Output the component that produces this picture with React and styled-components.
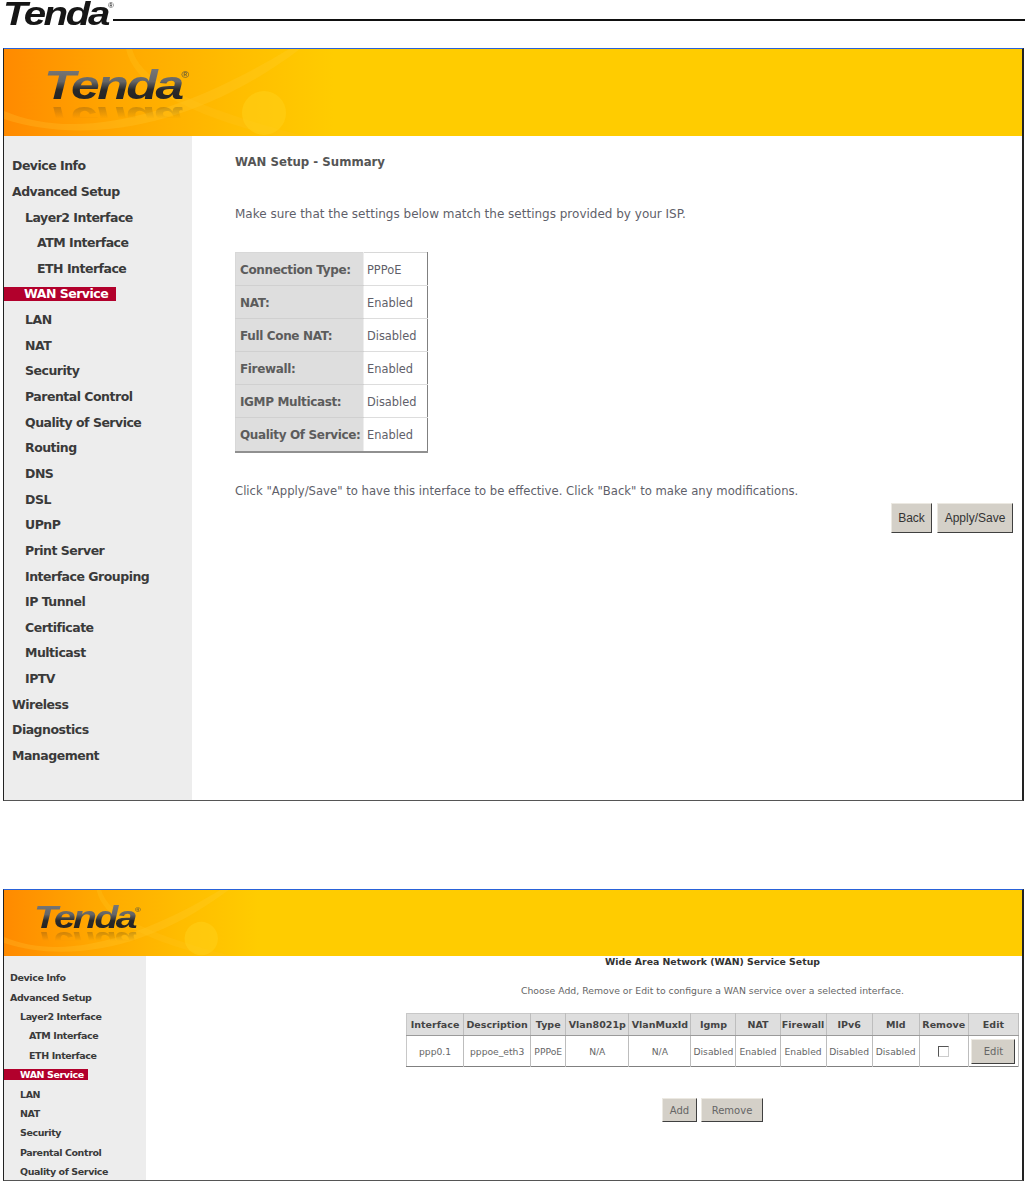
import styled, { createGlobalStyle } from "styled-components"

const GlobalStyle = createGlobalStyle`
    html, body { margin: 0; padding: 0; background: #fff; }
    body { width: 1025px; height: 1181px; overflow: hidden; font-family: "DejaVu Sans", Tahoma, sans-serif; }
`

const topMenu = [
    ["Device Info", 0], ["Advanced Setup", 0], ["Layer2 Interface", 1], ["ATM Interface", 2], ["ETH Interface", 2],
    ["WAN Service", 1, true], ["LAN", 1], ["NAT", 1], ["Security", 1], ["Parental Control", 1], ["Quality of Service", 1],
    ["Routing", 1], ["DNS", 1], ["DSL", 1], ["UPnP", 1], ["Print Server", 1], ["Interface Grouping", 1], ["IP Tunnel", 1],
    ["Certificate", 1], ["Multicast", 1], ["IPTV", 1], ["Wireless", 0], ["Diagnostics", 0], ["Management", 0],
]
const summary = [
    ["Connection Type:", "PPPoE"], ["NAT:", "Enabled"], ["Full Cone NAT:", "Disabled"],
    ["Firewall:", "Enabled"], ["IGMP Multicast:", "Disabled"], ["Quality Of Service:", "Enabled"],
]
const columns = [
    ["Interface", 57, "ppp0.1"], ["Description", 67, "pppoe_eth3"], ["Type", 35, "PPPoE"], ["Vlan8021p", 63, "N/A"],
    ["VlanMuxId", 62, "N/A"], ["Igmp", 45, "Disabled"], ["NAT", 44, "Enabled"], ["Firewall", 46, "Enabled"],
    ["IPv6", 46, "Disabled"], ["Mld", 47, "Disabled"], ["Remove", 49], ["Edit", 50],
]

const Swirl = () => (
    <BannerArt viewBox="0 0 400 87" aria-hidden="true">
        <path d="M0 62 C70 92 170 70 285 0 L296 0 C190 80 80 96 0 70 Z" fill="#ffd23a" opacity="0.22" />
        <path d="M128 0 C138 34 190 58 300 87 L270 87 C180 64 130 36 122 0 Z" fill="#ffc21a" opacity="0.3" />
        <circle cx="260" cy="64" r="22" fill="#ffd21c" opacity="0.45" />
    </BannerArt>
)

const App = () => {
    return (
        <>
            <GlobalStyle />
            <DocHeader>
                <DocLogo>Tenda<Registered>®</Registered></DocLogo>
                <DocRule />
            </DocHeader>

            <Frame $height={753}>
                <Banner $height={87} $pad="16px 0 0 40px" $end={330}>
                    <Swirl />
                    <BannerLogo $size={41}>Tenda<Registered>®</Registered></BannerLogo>
                </Banner>
                <Body>
                    <Sidebar $width={188} $pad={17}>
                        {topMenu.map(([label, level, active]) => (
                            <MenuItem key={label} $h={25.65} $size={12.5} $track={-0.5} $indent={[8, 21, 33][level]} $active={active}>
                                <MenuLabel $active={active} $barH={14} $barW={112} $barPad={20}>{label}</MenuLabel>
                            </MenuItem>
                        ))}
                    </Sidebar>
                    <Summary>
                        <SummaryTitle>WAN Setup - Summary</SummaryTitle>
                        <SummaryText $top={38} $size={12}>Make sure that the settings below match the settings provided by your ISP.</SummaryText>
                        <SummaryTable>
                            <tbody>
                                {summary.map(([key, value]) => (
                                    <tr key={key}>
                                        <SummaryKey>{key}</SummaryKey>
                                        <SummaryValue>{value}</SummaryValue>
                                    </tr>
                                ))}
                            </tbody>
                        </SummaryTable>
                        <SummaryText $top={31} $size={11.65}>Click "Apply/Save" to have this interface to be effective. Click "Back" to make any modifications.</SummaryText>
                        <ActionRow>
                            <Button $w={41} $h={30}>Back</Button>
                            <Button $w={76} $h={30}>Apply/Save</Button>
                        </ActionRow>
                    </Summary>
                </Body>
            </Frame>

            <Frame $height={292} $top={88}>
                <Banner $height={66} $pad="12px 0 0 30px" $end={255}>
                    <Swirl />
                    <BannerLogo $size={31}>Tenda<Registered>®</Registered></BannerLogo>
                </Banner>
                <Body>
                    <Sidebar $width={142} $pad={12}>
                        {topMenu.slice(0, 11).map(([label, level, active]) => (
                            <MenuItem key={label} $h={19.4} $size={9.5} $track={-0.4} $indent={[6, 16, 25][level]} $active={active}>
                                <MenuLabel $active={active} $barH={11} $barW={84} $barPad={16}>{label}</MenuLabel>
                            </MenuItem>
                        ))}
                    </Sidebar>
                    <Services>
                        <ServicesTitle>Wide Area Network (WAN) Service Setup</ServicesTitle>
                        <ServicesText>Choose Add, Remove or Edit to configure a WAN service over a selected interface.</ServicesText>
                        <ServiceTable>
                            <colgroup>
                                {columns.map(([name, width]) => <col key={name} style={{ width }} />)}
                            </colgroup>
                            <thead>
                                <tr>{columns.map(([name]) => <ServiceHead key={name}>{name}</ServiceHead>)}</tr>
                            </thead>
                            <tbody>
                                <tr>
                                    {columns.slice(0, 10).map(([name, , value]) => <ServiceCell key={name}>{value}</ServiceCell>)}
                                    <ServiceCell><RemoveBox /></ServiceCell>
                                    <ServiceCell><Button $w={44} $h={25} $small>Edit</Button></ServiceCell>
                                </tr>
                            </tbody>
                        </ServiceTable>
                        <CenterRow>
                            <Button $w={35} $h={24} $small>Add</Button>
                            <Button $w={62} $h={24} $small>Remove</Button>
                        </CenterRow>
                    </Services>
                </Body>
            </Frame>
        </>
    )
}
export default App

const DocHeader = styled.header`
    height: 48px;
    display: flex;
    align-items: flex-start;
    padding-left: 3px;
    box-sizing: border-box;
`
const DocLogo = styled.div`
    width: 110px;
    font: italic bold 33px/27px "Liberation Sans", sans-serif;
    letter-spacing: -2px;
    color: #161616;
    white-space: nowrap;
    transform: scaleX(1.22);
    transform-origin: left top;
`
const Registered = styled.sup`
    font-size: 0.2em;
    font-style: normal;
    font-weight: normal;
    letter-spacing: 0;
    vertical-align: 2.6em;
    line-height: 0;
`
const DocRule = styled.div`
    flex: 1;
    height: 2px;
    margin-top: 19px;
    background: #111;
`
const Frame = styled.section`
    width: 1021px;
    height: ${p => p.$height}px;
    margin: ${p => p.$top || 0}px 0 0 3px;
    box-sizing: border-box;
    border-top: 1px solid #2a62d8;
    border-left: 1px solid #222;
    border-right: 2px solid #222;
    border-bottom: 1px solid #555;
    display: flex;
    flex-direction: column;
    overflow: hidden;
`
const Banner = styled.div`
    position: relative;
    flex: none;
    height: ${p => p.$height}px;
    padding: ${p => p.$pad};
    box-sizing: border-box;
    background: linear-gradient(90deg, #ff8a00 0, #ffa800 ${p => p.$end * 0.35}px, #ffbd00 ${p => p.$end * 0.7}px, #ffcc00 ${p => p.$end}px);
    overflow: hidden;
`
const BannerArt = styled.svg`
    position: absolute;
    left: 0;
    top: 0;
    height: 100%;
`
const BannerLogo = styled.div`
    position: relative;
    font: italic bold ${p => p.$size}px/1 "Liberation Sans", sans-serif;
    letter-spacing: -2px;
    color: #3c3c3c;
    background: linear-gradient(180deg, #7c7c7c 0, #666 40%, #2a2a2a 60%, #202020 100%);
    -webkit-background-clip: text;
    background-clip: text;
    -webkit-text-fill-color: transparent;
    width: max-content;
    transform: scaleX(1.26);
    transform-origin: left top;
    -webkit-box-reflect: below -6px linear-gradient(transparent 55%, rgba(0, 0, 0, 0.35));
    sup { -webkit-text-fill-color: #8a6a10; }
`
const Body = styled.div`
    flex: 1;
    display: flex;
    min-height: 0;
`
const Sidebar = styled.nav`
    flex: none;
    width: ${p => p.$width}px;
    padding-top: ${p => p.$pad}px;
    box-sizing: border-box;
    background: #ededed;
`
const MenuItem = styled.div`
    height: ${p => p.$h}px;
    display: flex;
    align-items: center;
    padding-left: ${p => p.$active ? 0 : p.$indent}px;
    font-size: ${p => p.$size}px;
    font-weight: bold;
    letter-spacing: ${p => p.$track}px;
    color: #3a3a3a;
    white-space: nowrap;
`
const MenuLabel = styled.span`
    ${p => p.$active && `
        display: block;
        width: ${p.$barW}px;
        height: ${p.$barH}px;
        line-height: ${p.$barH}px;
        padding-left: ${p.$barPad}px;
        box-sizing: border-box;
        background: #b2002c;
        color: #fff;
    `}
`
const Summary = styled.main`
    flex: 1;
    padding: 19px 9px 0 43px;
    box-sizing: border-box;
`
const SummaryTitle = styled.h1`
    margin: 0;
    font-size: 11.75px;
    line-height: 14px;
    color: #555;
`
const SummaryText = styled.p`
    margin: ${p => p.$top}px 0 0;
    font-size: ${p => p.$size}px;
    line-height: 14px;
    color: #5f5f6a;
`
const SummaryTable = styled.table`
    margin-top: 31px;
    width: 193px;
    height: 201px;
    table-layout: fixed;
    border-collapse: collapse;
    border-top: 1px solid #d8d8d8;
    border-left: 1px solid #d8d8d8;
    border-right: 1px solid #808080;
    border-bottom: 2px solid #909090;
`
const SummaryKey = styled.td`
    width: 128px;
    padding: 1px 0 0 4px;
    box-sizing: border-box;
    background: #dedede;
    border-bottom: 1px solid #d0d0d0;
    border-right: 1px solid #eee;
    font-size: 12px;
    font-weight: bold;
    letter-spacing: -0.35px;
    color: #5c5c5c;
    white-space: nowrap;
`
const SummaryValue = styled.td`
    padding: 1px 0 0 3px;
    border-bottom: 1px solid #ddd;
    font-size: 11.4px;
    color: #5f5f6a;
`
const ActionRow = styled.div`
    display: flex;
    justify-content: flex-end;
    gap: 5px;
    margin-top: 5px;
`
const Button = styled.button`
    width: ${p => p.$w}px;
    height: ${p => p.$h}px;
    padding: 0;
    box-sizing: border-box;
    background: #d4d0c8;
    border: 1px solid;
    border-color: #ece9e2 #404040 #404040 #ece9e2;
    font-family: ${p => p.$small ? '"DejaVu Sans"' : '"Liberation Sans"'}, sans-serif;
    font-size: ${p => p.$small ? 10 : 12}px;
    color: ${p => p.$small ? "#666" : "#333"};
`
const Services = styled.main`
    flex: 1;
    padding: 0 3px 0 260px;
    box-sizing: border-box;
    display: flex;
    flex-direction: column;
    align-items: center;
`
const ServicesTitle = styled.h2`
    margin: 0;
    font-size: 9.35px;
    line-height: 12px;
    color: #333;
`
const ServicesText = styled.p`
    margin: 17px 0 0;
    font-size: 9.3px;
    line-height: 12px;
    color: #666;
`
const ServiceTable = styled.table`
    margin-top: 16px;
    width: 613px;
    table-layout: fixed;
    border-collapse: collapse;
    border-top: 1px solid #c8c8c8;
    border-left: 1px solid #c8c8c8;
    border-right: 1px solid #808080;
    border-bottom: 1px solid #808080;
`
const ServiceHead = styled.th`
    height: 21px;
    padding: 0;
    background: #dedede;
    border-right: 1px solid #bdbdbd;
    border-bottom: 1px solid #9a9a9a;
    font-size: 9.5px;
    color: #444;
    white-space: nowrap;
    overflow: hidden;
`
const ServiceCell = styled.td`
    height: 30px;
    padding: 0;
    border-right: 1px solid #bdbdbd;
    text-align: center;
    font-size: 9.2px;
    color: #666;
    white-space: nowrap;
    overflow: hidden;
`
const RemoveBox = styled.span`
    display: inline-block;
    width: 9px;
    height: 9px;
    vertical-align: middle;
    border: 1px solid;
    border-color: #555 #ccc #ccc #555;
`
const CenterRow = styled.div`
    display: flex;
    gap: 4px;
    margin-top: 31px;
`
